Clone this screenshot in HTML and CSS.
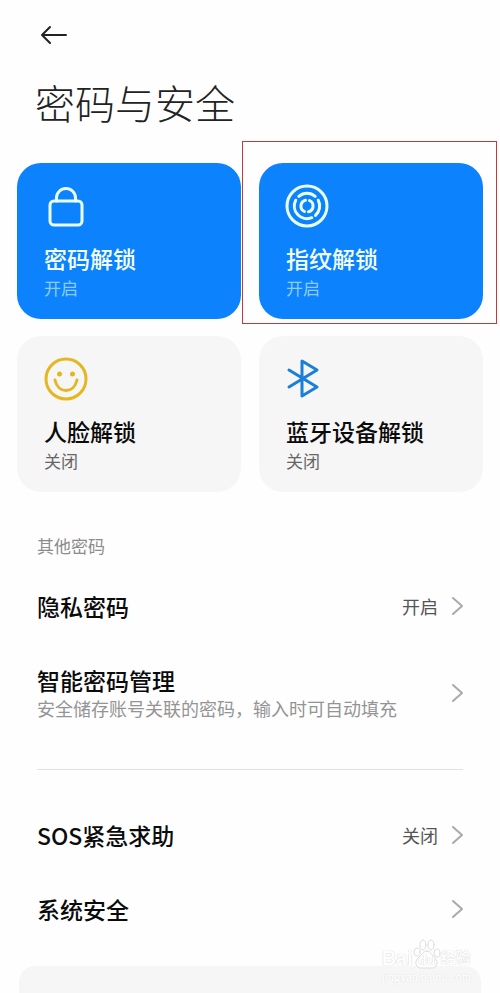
FILE: index.html
```html
<!DOCTYPE html>
<html lang="zh-CN">
<head>
    <meta charset="UTF-8">
    <meta name="viewport" content="width=device-width, initial-scale=1.0">
    <title>密码与安全</title>
    <link rel="stylesheet" href="styles.css">
</head>
<body>
    <header class="top-bar">
        <button class="back-button" type="button" aria-label="返回">
            <svg width="28" height="20" viewBox="0 0 28 20">
                <path d="M11 2 L3 10 L11 18 M3 10 H27"/>
            </svg>
        </button>
    </header>

    <main class="content">
        <h1 class="page-title">密码与安全</h1>

        <div class="unlock-grid">
            <button class="unlock-card active" type="button">
                <svg class="card-icon" viewBox="0 0 44 44">
                    <rect x="6" y="16" width="32" height="24" rx="4"/>
                    <path d="M12.500 16 V13 A9.500 9.500 0 0 1 31.500 13 V16"/>
                </svg>
                <span class="card-title">密码解锁</span>
                <span class="card-status">开启</span>
            </button>
            <button class="unlock-card active highlighted" type="button">
                <svg class="card-icon" viewBox="0 0 44 44">
                    <circle cx="21" cy="21" r="20"/>
                    <path d="M12.800 11.300 A12.700 12.700 0 0 1 29.200 11.300"/>
                    <path d="M32.300 15.200 A12.700 12.700 0 0 1 29.500 30.400"/>
                    <path d="M25.800 32.700 A12.700 12.700 0 0 1 9.700 15.200"/>
                    <path d="M18.500 26.500 A6 6 0 0 1 19.500 15.200"/>
                    <path d="M23.500 15.500 A6 6 0 0 1 22.500 26.800"/>
                </svg>
                <span class="card-title">指纹解锁</span>
                <span class="card-status">开启</span>
            </button>
            <button class="unlock-card" type="button">
                <svg class="card-icon face" viewBox="0 0 44 44">
                    <circle cx="22" cy="21" r="20"/>
                    <path d="M11 22 C14 36 30 36 33 22"/>
                    <circle class="eye" cx="15.500" cy="16" r="2.500"/>
                    <circle class="eye" cx="28.500" cy="16" r="2.500"/>
                </svg>
                <span class="card-title">人脸解锁</span>
                <span class="card-status">关闭</span>
            </button>
            <button class="unlock-card" type="button">
                <svg class="card-icon bluetooth" viewBox="0 0 44 44">
                    <path d="M3 12 L31 29 L16 38 V3 L31 12 L3 29"/>
                </svg>
                <span class="card-title">蓝牙设备解锁</span>
                <span class="card-status">关闭</span>
            </button>
        </div>

        <section class="settings">
            <h2 class="section-label">其他密码</h2>
            <a class="row" href="#privacy">
                <span class="row-text"><span class="row-title">隐私密码</span></span>
                <span class="row-value">开启</span>
                <svg class="chevron" viewBox="0 0 12 20"><path d="M2 2 L11 10 L2 18"/></svg>
            </a>
            <a class="row" href="#manager">
                <span class="row-text">
                    <span class="row-title">智能密码管理</span>
                    <span class="row-desc">安全储存账号关联的密码，输入时可自动填充</span>
                </span>
                <svg class="chevron" viewBox="0 0 12 20"><path d="M2 2 L11 10 L2 18"/></svg>
            </a>
            <hr class="divider">
            <a class="row" href="#sos">
                <span class="row-text"><span class="row-title">SOS紧急求助</span></span>
                <span class="row-value">关闭</span>
                <svg class="chevron" viewBox="0 0 12 20"><path d="M2 2 L11 10 L2 18"/></svg>
            </a>
            <a class="row" href="#system">
                <span class="row-text"><span class="row-title">系统安全</span></span>
                <svg class="chevron" viewBox="0 0 12 20"><path d="M2 2 L11 10 L2 18"/></svg>
            </a>
        </section>

        <div class="more-card"></div>
    </main>

    <div class="watermark">
        <div class="watermark-logo">
            <span>Bai</span>
            <span class="paw">
                <svg width="28" height="30" viewBox="0 0 28 30">
                    <ellipse cx="4" cy="13" rx="3" ry="4"/>
                    <ellipse cx="10" cy="6" rx="3" ry="5"/>
                    <ellipse cx="18" cy="6" rx="3" ry="5"/>
                    <ellipse cx="24" cy="14" rx="3" ry="4"/>
                    <path d="M14 12 C18 12 19 17 22 19 C26 23 24 29 19 29 H8 C3 29 1 23 5 19 C9 16 10 12 14 12 Z"/>
                </svg>
                <span class="du">du</span>
            </span>
            <span class="cn">经验</span>
        </div>
        <div class="watermark-url">jingyan.baidu.com</div>
    </div>
</body>
</html>
```
FILE: styles.css
```css
* {
    margin: 0;
    padding: 0;
    box-sizing: border-box;
}

body {
    min-height: 100vh;
    display: flex;
    flex-direction: column;
    position: relative;
    background-color: #fefefe;
    color: #0b0b0b;
    font-family: "Noto Sans CJK SC", sans-serif;
}

button {
    border: none;
    background: none;
    font-family: inherit;
    color: inherit;
    text-align: left;
    cursor: pointer;
}

svg {
    fill: none;
    stroke-linecap: round;
    stroke-linejoin: round;
}

.top-bar {
    height: 70px;
    padding: 0 39px;
    display: flex;
    align-items: center;
}

.back-button {
    display: flex;
    stroke: #222;
    stroke-width: 2;
}

.content {
    flex: 1;
    display: flex;
    flex-direction: column;
    padding: 6px 17px 0;
}

.page-title {
    padding: 0 18px;
    font-size: 40px;
    line-height: 52px;
    font-weight: 300;
    color: #222;
}

/* Unlock method cards */
.unlock-grid {
    display: grid;
    grid-template-columns: 1fr 1fr;
    gap: 17px 18px;
    margin-top: 35px;
}

.unlock-card {
    position: relative;
    display: flex;
    flex-direction: column;
    align-items: flex-start;
    padding: 22px 27px 20px;
    border-radius: 24px;
    background-color: #f6f6f6;
}

.unlock-card.active {
    background-color: #0c82fc;
    color: #f4ffff;
}

.unlock-card.highlighted::after {
    content: "";
    position: absolute;
    inset: -22px -14px -5px -17px;
    border: 1px solid #c23b3b;
}

.card-icon {
    width: 44px;
    height: 44px;
    stroke: #e8ffff;
    stroke-width: 3;
    overflow: visible;
}

.card-icon.face {
    stroke: #e3b71f;
}

.card-icon .eye {
    fill: #e3b71f;
    stroke: none;
}

.card-icon.bluetooth {
    stroke: #1a7fd6;
}

.card-title {
    margin-top: 14px;
    font-size: 23px;
    line-height: 30px;
    font-weight: 500;
}

.card-status {
    margin-top: 4px;
    font-size: 17px;
    line-height: 22px;
    color: #666;
}

.active .card-status {
    color: #8fcbfd;
}

/* Settings list */
.settings {
    padding: 42px 20px 0;
}

.section-label {
    margin-bottom: 11px;
    font-size: 17px;
    line-height: 24px;
    font-weight: 400;
    color: #8c8c8c;
}

.row {
    display: flex;
    align-items: center;
    padding: 22px 0;
    color: inherit;
    text-decoration: none;
}

.row-text {
    flex: 1;
    display: flex;
    flex-direction: column;
}

.row-title {
    font-size: 23px;
    line-height: 30px;
    font-weight: 500;
}

.row-desc {
    font-size: 18px;
    line-height: 26px;
    color: #949494;
    white-space: nowrap;
}

.row-value {
    font-size: 18px;
    line-height: 26px;
    color: #555;
}

.chevron {
    flex: none;
    width: 12px;
    height: 20px;
    margin-left: 13px;
    stroke: #aaa;
    stroke-width: 2;
}

.divider {
    margin: 26px 0 28px;
    border: none;
    border-top: 1px solid #e2e2e2;
}

.more-card {
    flex: 1;
    margin: 20px 2px 0;
    border-radius: 16px 16px 0 0;
    background-color: #f6f6f6;
}

/* Watermark */
.watermark {
    position: absolute;
    right: 29px;
    bottom: 8px;
    color: #fff;
    font-family: "Liberation Sans", "Noto Sans CJK SC", sans-serif;
    text-shadow: 0 0 1px #bbb;
    pointer-events: none;
}

.watermark-logo {
    display: flex;
    align-items: flex-end;
    font-size: 20px;
    line-height: 22px;
    font-weight: 700;
}

.watermark-logo .cn {
    font-size: 15px;
}

.paw {
    display: flex;
    position: relative;
}

.paw svg {
    fill: #fff;
    stroke: #ddd;
}

.du {
    position: absolute;
    inset: auto 0 0;
    font-size: 14px;
    line-height: 18px;
    text-align: center;
}

.watermark-url {
    font-family: "Liberation Serif", serif;
    font-size: 12px;
    line-height: 16px;
    text-shadow: 0 0 2px #ddd;
}
```
